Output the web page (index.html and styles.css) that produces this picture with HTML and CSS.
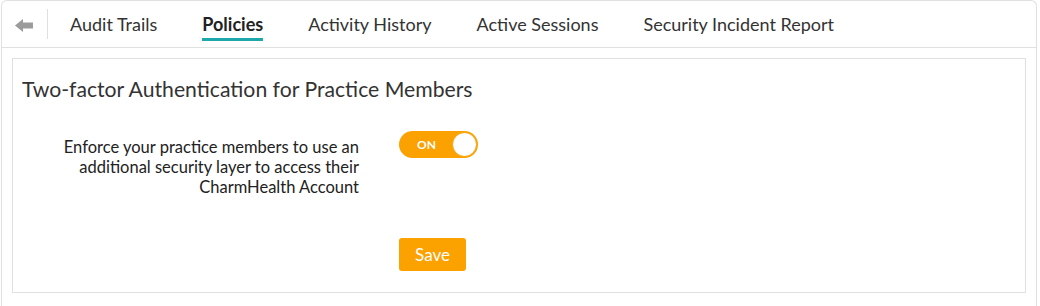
FILE: index.html
```html
<!DOCTYPE html>
<html lang="en">
<head>
  <meta charset="UTF-8">
  <title>Security Settings</title>
  <link rel="stylesheet" href="styles.css">
</head>
<body>

  <div class="wrap">
    <div class="tabs">
      <button class="back" title="Back">
        <svg width="18" height="13" viewBox="0 0 18 13"><path d="M0 6.5 L8 0 L8 3.5 L18 3.5 L18 9.5 L8 9.5 L8 13 Z" fill="#9b9b9b"/></svg>
      </button>
      <div class="tab-list">
        <a class="tab">Audit Trails</a>
        <a class="tab active">Policies</a>
        <a class="tab">Activity History</a>
        <a class="tab">Active Sessions</a>
        <a class="tab">Security Incident Report</a>
      </div>
    </div>

    <div class="panel">
      <h2 class="panel-title">Two-factor Authentication for Practice Members</h2>
      <div class="form">
        <div class="label">Enforce your practice members to use an additional security layer to access their CharmHealth Account</div>
        <div class="toggle on" onclick="this.classList.toggle('on')">
          <span class="toggle-text">ON</span>
          <span class="knob"></span>
        </div>
        <div></div>
        <div><button class="save">Save</button></div>
      </div>
    </div>
  </div>

</body>
</html>
```

FILE: styles.css
```css
:root {
  --line: #e0e0e0;
  --text: #333;
  --accent: #fba100;
  --teal: #1fa8ab;
}
body {
  margin: 0;
  font-family: Lato, "Open Sans", sans-serif;
  color: var(--text);
  background: #fff;
}
.wrap {
  margin-left: 1px;
  width: 1036px;
  height: 320px;
  border: 1px solid var(--line);
  border-bottom: none;
  border-radius: 6px 6px 0 0;
  box-sizing: border-box;
}
.tabs {
  display: flex;
  align-items: center;
  height: 46px;
  border-bottom: 1px solid var(--line);
}
.back {
  background: none;
  border: none;
  border-right: 1px solid var(--line);
  height: 30px;
  width: 46px;
  padding: 0 0 0 13px;
  text-align: left;
  cursor: pointer;
}
.back svg { display: block; margin-top: 3px; }
.tab-list {
  display: flex;
  gap: 45px;
  margin-left: 22px;
  height: 100%;
}
.tab {
  display: flex;
  align-items: center;
  font-size: 18px;
  color: var(--text);
  cursor: pointer;
  box-sizing: border-box;
  padding-top: 6px;
  height: 40px;
  position: relative;
}
.tab.active {
  font-weight: bold;
  color: #222;
}
.tab.active::after {
  content: "";
  position: absolute;
  left: 0; right: 0; bottom: 0;
  height: 3px;
  background: var(--teal);
}
.panel {
  margin: 10px;
  border: 1px solid var(--line);
  padding: 18px 9px 21px;
}
.panel-title {
  margin: 0 0 30px;
  font-size: 21.2px;
  line-height: 24px;
  font-weight: normal;
  color: var(--text);
}
.form {
  display: grid;
  grid-template-columns: 337px auto;
  column-gap: 40px;
  row-gap: 41px;
  align-items: start;
}
.label {
  text-align: right;
  font-size: 16.5px;
  line-height: 20px;
  padding-top: 6px;
  color: #222;
}
.toggle {
  position: relative;
  width: 79px;
  height: 27px;
  border-radius: 14px;
  background: #ccc;
  cursor: pointer;
}
.toggle.on { background: var(--accent); }
.toggle-text {
  position: absolute;
  left: 18px; top: 0;
  line-height: 27px;
  font-size: 12px;
  font-weight: bold;
  color: #fff;
}
.knob {
  position: absolute;
  top: 1px; left: 1px;
  width: 23px; height: 23px;
  border-radius: 50%;
  background: #fff;
  border: 1px solid #ccc;
}
.toggle.on .knob {
  left: auto; right: 1px;
  border-color: var(--accent);
}
.save {
  background: var(--accent);
  color: #fff;
  border: none;
  border-radius: 3px;
  width: 67px;
  height: 33px;
  font-family: inherit;
  font-size: 17px;
  cursor: pointer;
}
```
